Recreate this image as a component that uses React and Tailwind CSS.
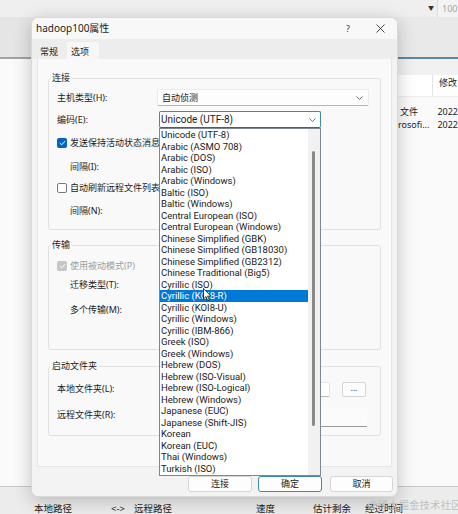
import React from 'react';

const encodings = [
  'Unicode (UTF-8)',
  'Arabic (ASMO 708)',
  'Arabic (DOS)',
  'Arabic (ISO)',
  'Arabic (Windows)',
  'Baltic (ISO)',
  'Baltic (Windows)',
  'Central European (ISO)',
  'Central European (Windows)',
  'Chinese Simplified (GBK)',
  'Chinese Simplified (GB18030)',
  'Chinese Simplified (GB2312)',
  'Chinese Traditional (Big5)',
  'Cyrillic (ISO)',
  'Cyrillic (KOI8-R)',
  'Cyrillic (KOI8-U)',
  'Cyrillic (Windows)',
  'Cyrillic (IBM-866)',
  'Greek (ISO)',
  'Greek (Windows)',
  'Hebrew (DOS)',
  'Hebrew (ISO-Visual)',
  'Hebrew (ISO-Logical)',
  'Hebrew (Windows)',
  'Japanese (EUC)',
  'Japanese (Shift-JIS)',
  'Korean',
  'Korean (EUC)',
  'Thai (Windows)',
  'Turkish (ISO)',
];

function Chevron() {
  return (
    <svg width="7" height="4" viewBox="0 0 7 4" fill="none">
      <path d="M0.5 0.5 L3.5 3.4 L6.5 0.5" stroke="#5f5f5f" strokeWidth="0.9" />
    </svg>
  );
}

function CheckBox({ checked, disabled }) {
  if (!checked) {
    return <span className="w-[10px] h-[10px] rounded-[2px] border border-[#7a7a7a] bg-white shrink-0" />;
  }
  return (
    <span
      className={`w-[10px] h-[10px] rounded-[2px] flex items-center justify-center shrink-0 ${
        disabled ? 'bg-[#c6c6c6]' : 'bg-[#0067c0]'
      }`}
    >
      <svg width="7" height="6" viewBox="0 0 7 6" fill="none">
        <path d="M0.8 3 L2.7 4.8 L6.2 1.1" stroke="white" strokeWidth="1" />
      </svg>
    </span>
  );
}

function Group({ title, className, children }) {
  return (
    <fieldset className={`min-w-0 border border-[#e1e1e1] rounded-[3px] pl-[1px] pr-[11px] ${className}`}>
      <legend className="px-[2px] text-[9px] leading-[12px] text-[#1b1b1b]">{title}</legend>
      {children}
    </fieldset>
  );
}

function Button({ children, primary, className }) {
  return (
    <div
      className={`h-[16px] flex items-center justify-center rounded-[3px] bg-[#fdfdfd] text-[9px] text-[#1b1b1b] border ${
        primary ? 'border-[#3f8aa6]' : 'border-[#d6d6d6]'
      } ${className}`}
    >
      {children}
    </div>
  );
}

function EncodingList() {
  return (
    <div className="absolute left-0 top-full z-10 w-[162px] h-[348px] flex bg-white border border-[#7d8791] font-['Roboto','Noto_Sans',sans-serif]">
      <div className="flex-1">
        {encodings.map((e, i) => (
          <div
            key={e}
            className={`h-[11.53px] leading-[11.53px] pl-[1px] text-[9.5px] whitespace-nowrap overflow-hidden ${
              i === 14 ? 'bg-[#0078d7] text-white' : 'text-[#1a1a1a]'
            }`}
          >
            {e}
          </div>
        ))}
      </div>
      <div className="w-[12px] bg-[#f1f1f1] pt-[22px] pl-[4px]">
        <div className="w-[3px] h-[275px] rounded-full bg-[#8a8a8a]" />
      </div>
    </div>
  );
}

export default function App() {
  return (
    <div className="relative w-[458px] h-[514px] overflow-hidden font-['Noto_Sans','Noto_Sans_CJK_SC',sans-serif] text-[#1b1b1b]">
      {/* background window */}
      <div className="flex flex-col h-full">
        <div className="h-[17px] flex bg-[#efefef]">
          <div className="ml-auto flex items-center pr-[3px] text-[6px] text-[#333]">▼</div>
          <div className="w-[21px] border-l border-[#dcdcdc] bg-[#f3f3f3] flex items-center pl-[4px] text-[9px] text-[#a5a5a5]">
            100
          </div>
        </div>
        <div className="h-[42px] flex">
          <div className="w-[31px] bg-[#e5e5e5] border-b-2 border-[#a3a3a3]" />
          <div className="flex-1 bg-[#e9e9e9] border-b-2 border-[#5b87ab]" />
        </div>
        <div className="flex-1 flex bg-[#fafafa] border-b border-[#c9c9c9]">
          <div className="ml-auto w-[60px] flex flex-col">
            <div className="h-[16px] bg-[#f1f1f1]" />
            <div className="h-[22px] flex bg-white border-b border-[#eeeeee]">
              <div className="w-[35px] border-r border-[#e3e3e3]" />
              <div className="pl-[6px] pt-[2px] text-[9px] leading-[12px]">修改</div>
            </div>
            <div className="mt-[8px] flex h-[13px] items-center text-[9px]">
              <span className="w-[41px] pl-[2px]">文件</span>
              <span>2022</span>
            </div>
            <div className="flex h-[13px] items-center text-[9px]">
              <span className="w-[41px]">rosofi...</span>
              <span>2022</span>
            </div>
          </div>
        </div>
        <div className="h-[27px] bg-[#ececec] pt-[16px] flex text-[9.5px] leading-[12px] text-[#222]">
          <span className="ml-[34px]">本地路径</span>
          <span className="ml-[39px]">&lt;-&gt;</span>
          <span className="ml-[9px]">远程路径</span>
          <span className="ml-[84px]">速度</span>
          <span className="ml-[38px]">估计剩余</span>
          <span className="ml-[14px]">经过时间</span>
        </div>
      </div>

      {/* dialog */}
      <div className="absolute left-[31px] top-[17px] w-[367px] h-[480px] rounded-[7px] bg-[#f3f3f3] border border-[#d9d9d9] shadow-[0_4px_18px_rgba(0,0,0,0.22)] flex flex-col">
        <div className="h-[21px] flex items-center pl-[4px] bg-[#f8f8f8] rounded-t-[7px]">
          <span className="text-[10px]">hadoop100属性</span>
          <span className="ml-auto text-[9px] text-[#333]">?</span>
          <svg className="ml-[26px] mr-[12px]" width="9" height="9" viewBox="0 0 9 9">
            <path d="M0.5 0.5 L8.5 8.5 M8.5 0.5 L0.5 8.5" stroke="#333" strokeWidth="0.9" />
          </svg>
        </div>
        <div className="h-[20px] flex items-end bg-[#ededed] pl-[5px] text-[9px]">
          <div className="h-[17px] w-[30px] pl-[3px] flex items-center pt-[2px]">常规</div>
          <div className="h-[17px] w-[32px] pl-[4px] flex items-center pt-[2px] bg-[#f7f7f7]">选项</div>
        </div>

        <div className="mx-[5px] h-[408px] bg-[#f9f9f9] border border-[#e6e6e6] border-t-0 px-[10px] pt-[13px] text-[9px]">
          <Group title="连接" className="pb-[9px]">
            <div className="mt-[5px] h-[17px] flex items-center pl-[7px]">
              <span className="w-[100px]">主机类型(H):</span>
              <div className="flex-1 h-full flex items-center pl-[4px] pr-[5px] bg-[#fdfdfd] border border-[#ececec] border-b-[#b5b5b5] rounded-[2px]">
                <span>自动侦测</span>
                <span className="ml-auto">
                  <Chevron />
                </span>
              </div>
            </div>
            <div className="mt-[5px] h-[17px] flex items-center pl-[7px]">
              <span className="w-[102px]">编码(E):</span>
              <div className="relative w-[162px] h-full">
                <div className="h-full flex items-center pl-[1px] pr-[4px] bg-white border border-[#3f8aa6] border-b-[#1f6f8c] rounded-[2px] text-[10px] font-['Roboto','Noto_Sans',sans-serif]">
                  <span>Unicode (UTF-8)</span>
                  <span className="ml-auto">
                    <Chevron />
                  </span>
                </div>
                <EncodingList />
              </div>
            </div>
            <div className="mt-[6px] h-[18px] flex items-center gap-[3px] pl-[7px]">
              <CheckBox checked />
              <span className="whitespace-nowrap">发送保持活动状态消息(K)</span>
            </div>
            <div className="mt-[6px] h-[18px] flex items-center pl-[20px]">
              <span>间隔(I):</span>
            </div>
            <div className="mt-[3px] h-[18px] flex items-center gap-[3px] pl-[7px]">
              <CheckBox />
              <span className="whitespace-nowrap">自动刷新远程文件列表(A)</span>
            </div>
            <div className="mt-[5px] h-[18px] flex items-center pl-[20px]">
              <span>间隔(N):</span>
            </div>
          </Group>

          <Group title="传输" className="mt-[9px] pb-[30px]">
            <div className="mt-[6px] h-[18px] flex items-center gap-[3px] pl-[7px]">
              <CheckBox checked disabled />
              <span className="text-[#9d9d9d]">使用被动模式(P)</span>
            </div>
            <div className="mt-[1px] h-[18px] flex items-center pl-[20px]">
              <span>迁移类型(T):</span>
            </div>
            <div className="mt-[7px] h-[18px] flex items-center pl-[20px]">
              <span>多个传输(M):</span>
            </div>
          </Group>

          <Group title="启动文件夹" className="mt-[10px] pb-[11px]">
            <div className="mt-[8px] h-[18px] flex items-center pl-[7px]">
              <span className="w-[102px]">本地文件夹(L):</span>
              <div className="w-[171px] h-[15px] bg-white border border-[#e6e6e6] border-b-[#b5b5b5] rounded-[2px]" />
              <div className="ml-[12px] w-[24px] h-[15px] flex items-center justify-center bg-[#fdfdfd] border border-[#d6d6d6] rounded-[2px] text-[8px] leading-none pb-[3px]">
                ...
              </div>
            </div>
            <div className="mt-[8px] h-[18px] flex items-center pl-[7px]">
              <span className="w-[102px]">远程文件夹(R):</span>
              <div className="flex-1 h-[18px] mt-[5px] mr-[2px] bg-[#fbfbfb] border-b border-[#9a9a9a]" />
            </div>
          </Group>
        </div>

        <div className="mt-[9px] h-[16px] flex justify-end pr-[4px]">
          <Button className="w-[64px]">连接</Button>
          <Button primary className="w-[64px] ml-[6px]">确定</Button>
          <Button className="w-[63px] ml-[8px]">取消</Button>
        </div>
      </div>

      {/* mouse cursor */}
      <svg className="absolute left-[203px] top-[288px] z-20" width="9" height="14" viewBox="0 0 9 14">
        <path d="M0.5 0.5 L0.5 11 L3 8.6 L4.8 12.8 L6.3 12.1 L4.6 8.1 L8 8.1 Z" fill="white" stroke="#111" strokeWidth="0.8" />
      </svg>

      {/* watermark */}
      <div className="absolute left-[368px] top-[498px] text-[10.5px] leading-[14px] text-[#b4b4b4]/80 whitespace-nowrap">
        @稀土掘金技术社区
      </div>
    </div>
  );
}
